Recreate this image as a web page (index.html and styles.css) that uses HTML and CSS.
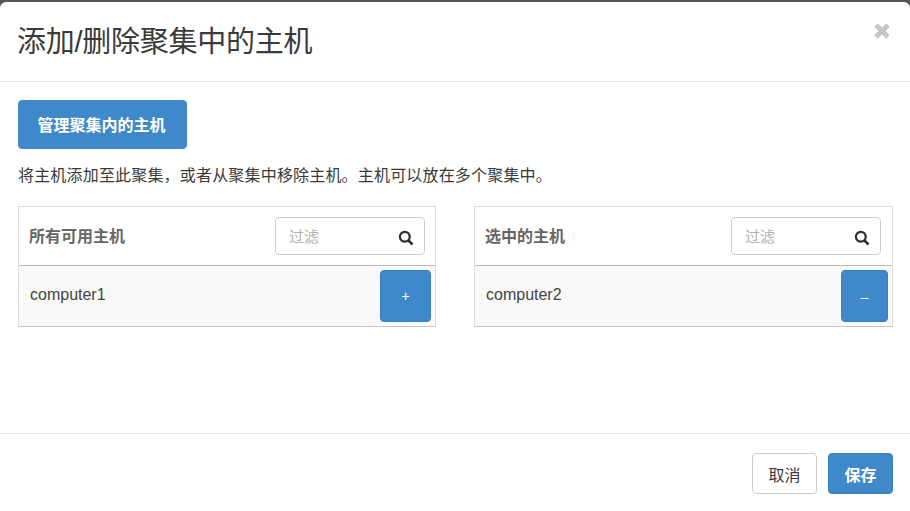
FILE: index.html
```html
<!DOCTYPE html>
<html lang="zh-CN">
<head>
  <meta charset="UTF-8" />
  <meta name="viewport" content="width=device-width, initial-scale=1.0" />
  <title>添加/删除聚集中的主机</title>
  <link rel="stylesheet" href="styles.css">
</head>
<body>
  <div class="modal">
    <!-- Header -->
    <div class="modal-header">
      <h3>添加/删除聚集中的主机</h3>
      <button class="close" aria-label="关闭">
        <svg width="18" height="18" viewBox="0 0 18 18"><path d="M3 3L15 15M15 3L3 15" fill="none" stroke="#c6c6c6" stroke-width="5"/></svg>
      </button>
    </div>

    <div class="modal-body">
      <button class="btn btn-primary btn-manage">管理聚集内的主机</button>
      <p class="help">将主机添加至此聚集&#65292;或者从聚集中移除主机。主机可以放在多个聚集中。</p>

      <div class="columns">
        <div class="panel">
          <div class="panel-head">
            <span class="panel-title">所有可用主机</span>
            <div class="filter">
              <span class="placeholder">过滤</span>
              <svg width="16" height="16" viewBox="0 0 16 16"><circle cx="6.8" cy="6.8" r="4.9" fill="none" stroke="#2b2b2b" stroke-width="2.2"/><path d="M10.4 10.4L14.5 14.5" stroke="#2b2b2b" stroke-width="2.6"/></svg>
            </div>
          </div>
          <div class="panel-row">
            <span>computer1</span>
            <button class="btn btn-primary btn-add">+</button>
          </div>
        </div>

        <div class="panel panel-right">
          <div class="panel-head">
            <span class="panel-title">选中的主机</span>
            <div class="filter">
              <span class="placeholder">过滤</span>
              <svg width="16" height="16" viewBox="0 0 16 16"><circle cx="6.8" cy="6.8" r="4.9" fill="none" stroke="#2b2b2b" stroke-width="2.2"/><path d="M10.4 10.4L14.5 14.5" stroke="#2b2b2b" stroke-width="2.6"/></svg>
            </div>
          </div>
          <div class="panel-row">
            <span>computer2</span>
            <button class="btn btn-primary btn-remove">&#8211;</button>
          </div>
        </div>
      </div>
    </div>

    <div class="modal-footer">
      <button class="btn btn-default">取消</button>
      <button class="btn btn-primary">保存</button>
    </div>
  </div>
</body>
</html>
```

FILE: styles.css
```css
html, body {
  height: 100%;
}

body {
  margin: 0;
  background: #555;
  color: #3a3a3a;
  font-family: "Liberation Sans", "Noto Sans CJK SC", sans-serif;
  font-size: 16px;
  overflow: hidden;
}

.modal {
  display: flex;
  flex-direction: column;
  height: 509px;
  margin-top: 2px;
  background: #fff;
  border-radius: 6px 6px 0 0;
}

.modal-header {
  display: flex;
  justify-content: space-between;
  height: 79px;
  padding: 0 18px;
  border-bottom: 1px solid #e5e5e5;
  flex-shrink: 0;
}

.modal-header h3 {
  margin: 21px 0 0 -1px;
  font-size: 29px;
  font-weight: 400;
  line-height: 38px;
  letter-spacing: -0.25px;
}

.close {
  width: 18px;
  height: 18px;
  margin: 20px 1px 0 0;
  padding: 0;
  background: none;
  border: none;
}

.close svg {
  display: block;
}

.modal-body {
  flex: 1;
  padding: 18px 18px 0;
}

.btn {
  height: 41px;
  width: 65px;
  padding: 0;
  border: 1px solid #ccc;
  border-radius: 4px;
  font-family: inherit;
  font-size: 16px;
  cursor: pointer;
}

.btn-primary {
  background: #3f88c9;
  border-color: #3a80bd;
  color: #fff;
  font-weight: 700;
}

.btn-default {
  background: #fff;
  color: #3a3a3a;
  font-weight: 400;
}

.btn-manage {
  display: block;
  width: 169px;
  height: 49px;
  padding: 0 2px 2px 0;
  border-color: #3f88c9;
}

.help {
  margin: 16px 0 19px;
  font-size: 16px;
  line-height: 22px;
  letter-spacing: 0.18px;
}

.columns {
  display: grid;
  grid-template-columns: 418px 419px;
  gap: 38px;
}

.panel {
  border: 1px solid #ddd;
  border-bottom-color: #c4c4c4;
}

.panel-head {
  display: flex;
  align-items: center;
  justify-content: space-between;
  height: 58px;
  padding: 0 10px;
  border-bottom: 1px solid #bbb;
}

.panel-right .panel-head {
  padding-right: 11px;
}

.panel-title {
  margin-top: -2px;
  color: #666;
  font-weight: 700;
}

.filter {
  display: flex;
  align-items: center;
  justify-content: space-between;
  box-sizing: border-box;
  width: 150px;
  height: 38px;
  padding: 0 10px 0 13px;
  border: 1px solid #ccc;
  border-radius: 4px;
}

.filter svg {
  margin-top: 3px;
}

.placeholder {
  margin-top: -2px;
  color: #b0b0b0;
  font-size: 15px;
}

.panel-row {
  display: flex;
  align-items: center;
  justify-content: space-between;
  height: 60px;
  padding: 0 4px 0 11px;
  background: #f9f9f9;
  color: #444;
}

.panel-row span {
  margin-top: -3px;
}

.btn-add,
.btn-remove {
  height: 52px;
  font-size: 14px;
  font-weight: 400;
}

.btn-add {
  width: 51px;
}

.btn-remove {
  width: 47px;
  padding-top: 2px;
}

.modal-footer {
  display: flex;
  justify-content: flex-end;
  gap: 11px;
  height: 58px;
  padding: 19px 17px 0 0;
  border-top: 1px solid #e5e5e5;
}
```
